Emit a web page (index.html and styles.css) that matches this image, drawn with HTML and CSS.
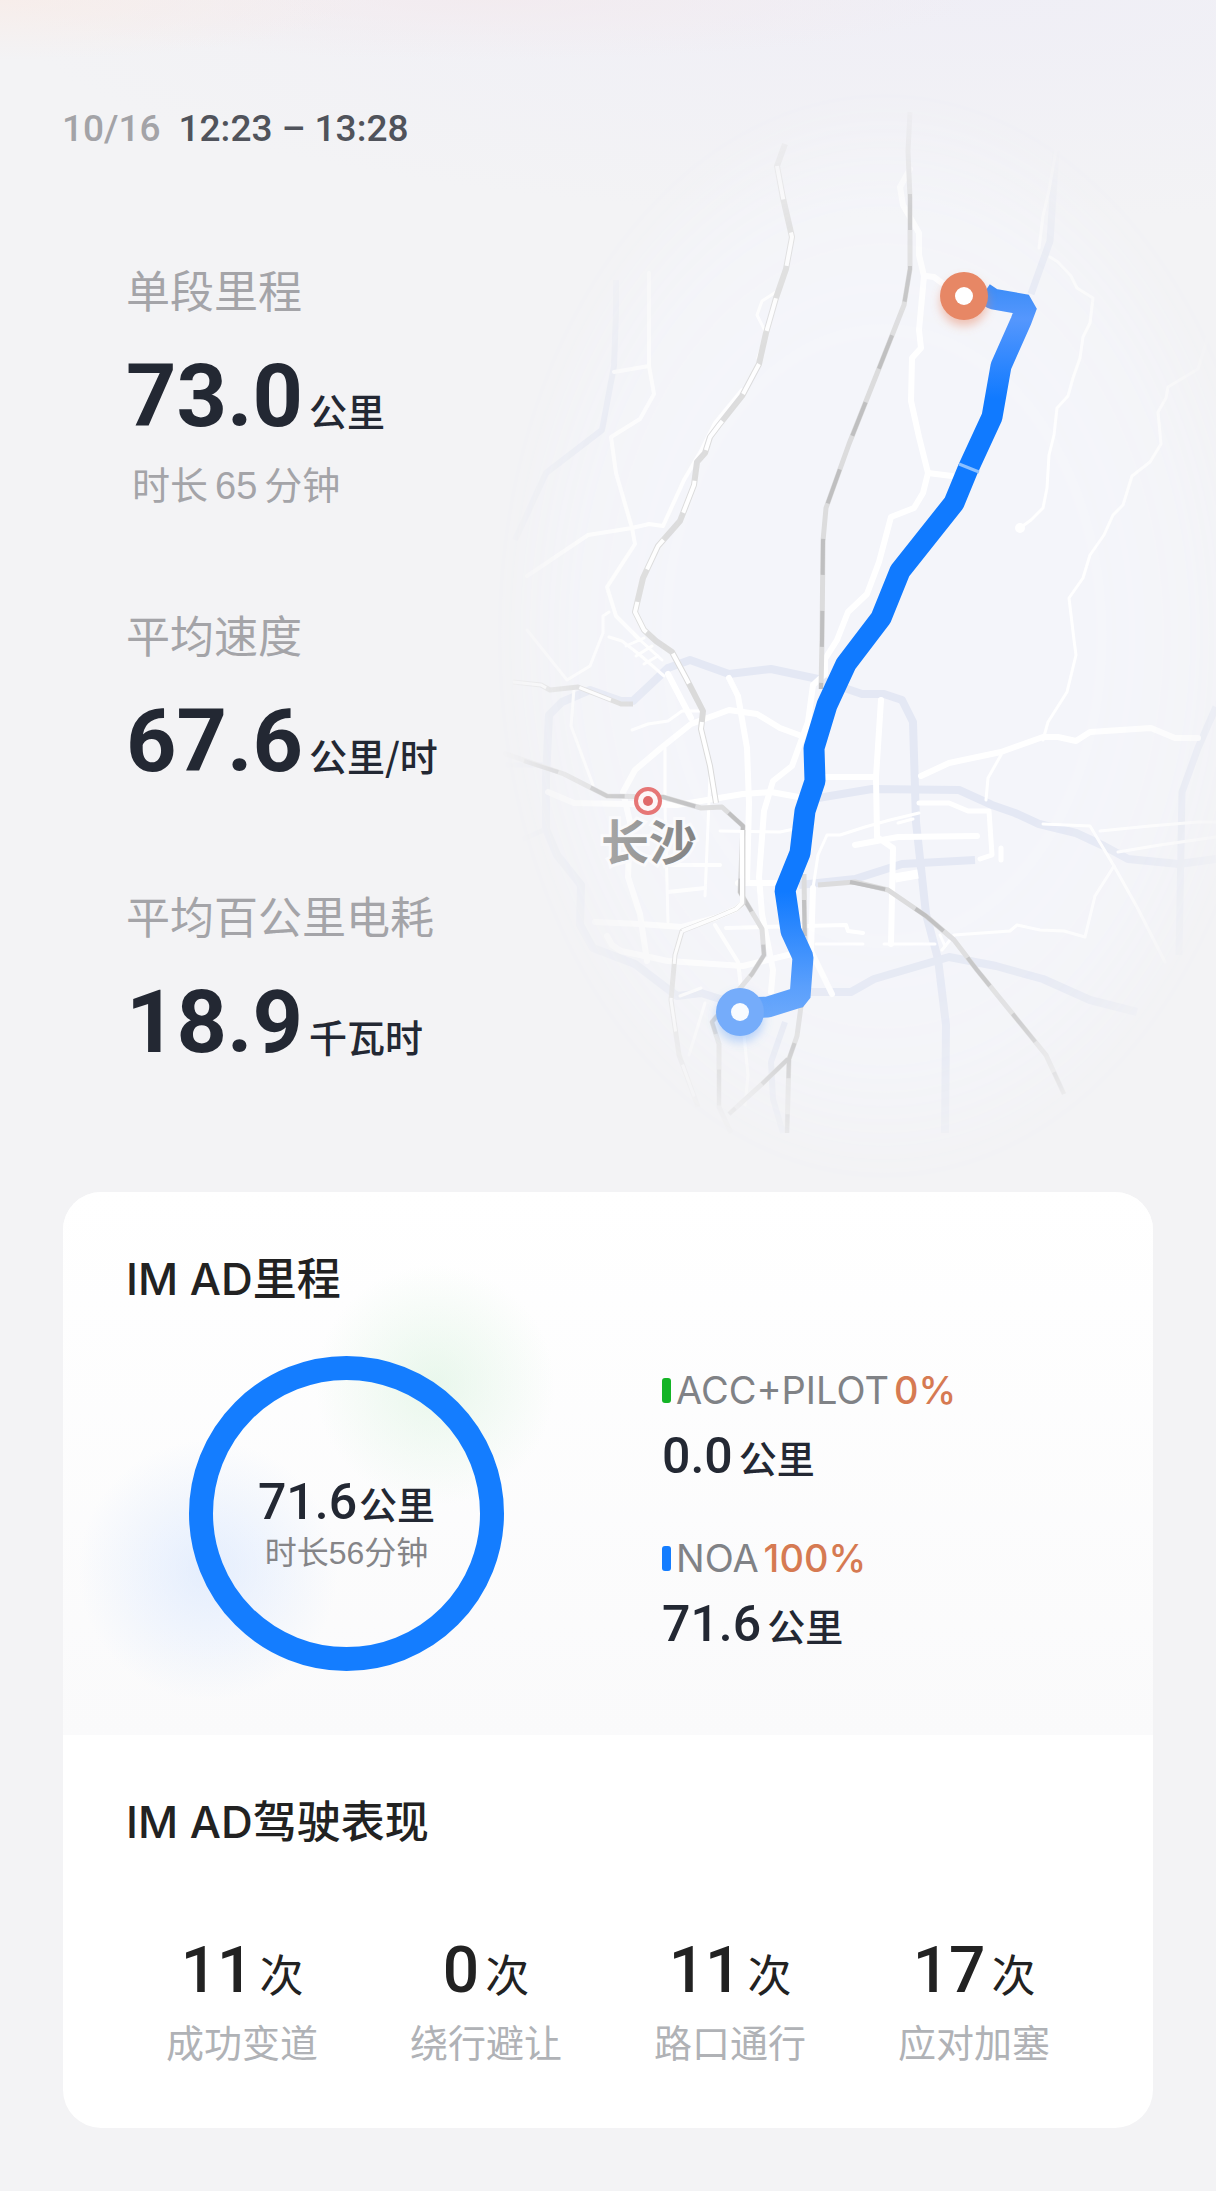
FILE: index.html
```html
<!DOCTYPE html>
<html lang="zh-CN">
<head>
<meta charset="utf-8">
<meta name="viewport" content="width=device-width, initial-scale=1">
<title>行程详情</title>
<link rel="stylesheet" href="styles.css">
</head>
<body>
<main class="page">
  <section class="hero">
    <div class="summary">
      <header class="trip-time">
        <span class="trip-date">10/16</span>
        <time class="trip-range">12:23 – 13:28</time>
      </header>
      <div class="metrics">
        <div class="metric">
          <h2 class="metric-label">单段里程</h2>
          <p class="metric-value"><strong class="num-xl">73.0</strong><span class="unit">公里</span></p>
          <p class="metric-note"><span>时长</span><span>65</span><span>分钟</span></p>
        </div>
        <div class="metric">
          <h2 class="metric-label">平均速度</h2>
          <p class="metric-value"><strong class="num-xl">67.6</strong><span class="unit">公里/时</span></p>
        </div>
        <div class="metric">
          <h2 class="metric-label">平均百公里电耗</h2>
          <p class="metric-value"><strong class="num-xl">18.9</strong><span class="unit">千瓦时</span></p>
        </div>
      </div>
    </div>

    <svg class="map" viewBox="480 80 736 1100" role="img" aria-label="行程路线">
      <defs>
        <radialGradient id="fade" gradientUnits="userSpaceOnUse" cx="0" cy="0" r="1" gradientTransform="translate(884 636) scale(392 550)">
          <stop offset="0.5" stop-color="#fff"/>
          <stop offset="0.78" stop-color="#fff" stop-opacity="0.7"/>
          <stop offset="1" stop-color="#fff" stop-opacity="0"/>
        </radialGradient>
        <mask id="oval" maskUnits="userSpaceOnUse" x="480" y="80" width="736" height="1100">
          <rect x="480" y="80" width="736" height="1100" fill="url(#fade)"/>
        </mask>
        <linearGradient id="route" gradientUnits="userSpaceOnUse" x1="0" y1="290" x2="0" y2="1015">
          <stop offset="0" stop-color="#3f8ef8"/>
          <stop offset="0.04" stop-color="#5597fd"/>
          <stop offset="0.15" stop-color="#107aff"/>
          <stop offset="0.83" stop-color="#107aff"/>
          <stop offset="0.96" stop-color="#5a9ffc"/>
          <stop offset="1" stop-color="#6aa8fb"/>
        </linearGradient>
        <linearGradient id="city" x1="0" y1="0" x2="1" y2="0">
          <stop offset="0" stop-color="#a9a9a9"/>
          <stop offset="1" stop-color="#828282"/>
        </linearGradient>
        <filter id="glow-end" x="-60%" y="-60%" width="220%" height="220%">
          <feDropShadow dx="0" dy="6" stdDeviation="5" flood-color="#e8835f" flood-opacity="0.45"/>
        </filter>
        <filter id="glow-start" x="-60%" y="-60%" width="220%" height="220%">
          <feDropShadow dx="0" dy="6" stdDeviation="5" flood-color="#5fa0f8" flood-opacity="0.4"/>
        </filter>
      </defs>

      <g mask="url(#oval)" fill="none" stroke-linejoin="round">
        <rect x="480" y="80" width="736" height="1100" fill="#f4f5fa"/>

        <!-- expressways -->
        <g stroke="#e4e8f4" stroke-width="8">
          <path d="M733 1003L701 993 677 996 635 964 593 948 580 925 581 885 557 855 546 829V777L549 715 562 702 590 690 621 701 633 701 668 668 690 660 729 674 771 669 818 679 862 694 884 694 902 700 913 722 916 822 926 914 938 959 946 1025 945 1133"/>
          <path d="M804 992L851 992 874 979 949 957 996 966 1043 979 1090 1000 1137 1012"/>
          <path d="M818 798L872 789 959 790 992 805 1015 813 1039 824 1076 833 1104 846 1128 859 1179 864 1216 859"/>
          <path d="M799 885L855 879 902 864 975 860"/>
          <path d="M1216 707L1198 748 1182 792 1179 955" stroke-width="7"/>
          <path d="M1056 151L1050 241 1031 294" stroke-width="7"/>
          <path d="M616 280V312L614 366 602 430 546 473 515 540" stroke-width="6"/>
          <path d="M785 1022L771 1062 773 1099 783 1133" stroke-width="6"/>
          <path d="M500 765H546M510 845L546 829" stroke-width="5"/>
        </g>

        <!-- city roads -->
        <g stroke="#fff" stroke-width="6" stroke-linecap="round">
          <path d="M910 169L900 187 903 205 919 233 919 255 924 276 919 330 921 348 912 358 911 401 919 437 928 473 923 493 914 508 891 517 879 562 867 594 848 612 837 640 825 659 825 674 813 685 808 722 792 766 773 781 764 811 759 877 762 914 773 970 771 992"/>
          <path d="M926 276L934 277 942 283M928 473L952 476"/>
          <path d="M921 776L949 763 1001 752 1043 737 1058 737 1076 741 1090 732 1151 728 1175 738 1198 738"/>
          <path d="M647 961L640 914 628 877 630 822 623 792 635 770 661 748 691 724 729 710 757 714 780 728 799 735"/>
          <path d="M729 678L738 696 747 748 749 803 747 883"/>
          <path d="M548 792L574 803 677 805 743 794 771 792 804 798"/>
          <path d="M881 700L876 777 877 837 893 848 891 944"/>
          <path d="M825 777H874M855 845L898 837 977 836"/>
          <path d="M668 674L691 718M738 883H780M743 903L736 909 715 918 682 927 640 924 595 922"/>
          <path d="M607 936L612 945 621 951 668 961 743 966 804 951"/>
          <path d="M919 803L949 803 968 811 989 811 992 855 980 859M1001 860V848" stroke-width="5"/>
          <path d="M813 888L811 951 832 994"/>
          <path d="M895 878L918 874" stroke-width="9" stroke-linecap="butt"/>
        </g>
        <g stroke="#fff" stroke-width="3" stroke-linecap="round">
          <path d="M1056 150L1049 190 1043 216 1039 248M1050 257L1058 262 1071 276 1077 288 1093 298 1090 323 1083 337 1080 358 1073 378 1068 396 1057 408 1054 435 1049 455 1047 488 1043 508 1031 520 1020 528"/>
          <path d="M1210 330L1198 369 1168 387 1166 398 1158 412 1161 444 1150 462 1132 476 1123 505 1113 515 1104 535 1090 555 1083 578 1069 598 1074 640 1076 655 1067 692 1048 722 1043 740"/>
          <path d="M649 273V366L654 394 640 419 611 437 616 473 632 528 635 544 607 587 616 616 640 640" stroke-width="4"/>
          <path d="M614 372L649 366M527 576L588 535 632 528 649 524 663 526 684 480 701 451 715 423 742 390" stroke-width="4"/>
          <path d="M766 333L757 315 762 301 776 292M758 358L766 333"/>
          <path d="M609 612L603 616 603 633 590 666 567 680 527 630"/>
          <path d="M574 689L571 726 593 785M665 748V807L668 922M710 777L705 896"/>
          <path d="M703 711L682 711 668 721 648 724 632 730"/>
          <path d="M609 637L622 641 640 655 664 676M626 646L644 638M636 656L652 646M644 664L658 656M640 640L662 660"/>
          <path d="M919 813L890 820 865 827 840 835 827 835 818 855 813 888M913 819L898 823"/>
          <path d="M1001 755L988 778 986 800M816 944H863M884 944H935M945 946L940 935"/>
          <path d="M942 950L954 935 1010 931 1017 925 1040 930 1064 931 1085 937 1095 896 1114 866 1090 826 1043 824"/>
          <path d="M1114 866L1137 907 1165 962M1100 831L1150 826 1198 822 1216 822M1118 852L1160 845 1216 837"/>
          <path d="M715 925L738 962 741 987M726 928L846 925 848 931 863 933M668 892L705 888M665 865H720" stroke-width="4"/>
          <path d="M705 1003L689 1055M680 996L701 988M744 1035L748 1075 745 1105M720 831L780 832 813 825"/>
        </g>
        <circle cx="1020" cy="528" r="5" fill="#fff"/>

        <!-- railways: light bed with darker sleepers -->
        <g stroke="#dcdcdd" stroke-width="5">
          <path d="M910 112L908 151 910 198 910 269 904 305 876 376 849 444 826 508 823 541 822 640 821 689"/>
          <path d="M503 753L564 774 607 796 663 797 701 808 722 807 743 826 740 892 762 929 764 955 752 974 712 1022 719 1044 719 1107 731 1133"/>
          <path d="M804 874L805 944 802 999 797 1036 789 1059 787 1133M788 1059L762 1084 729 1114"/>
          <path d="M818 885L855 882 888 890 926 916 954 940 977 970 1020 1023 1046 1055 1064 1094"/>
        </g>
        <g stroke="#bfbfc0" stroke-width="4" stroke-dasharray="36 36">
          <path d="M910 194L910 269 904 305 876 376 849 444 826 508 823 541 822 640 821 689"/>
          <path d="M524 761L564 774 607 796 663 797 701 808 722 807 743 826 740 892 762 929 764 955 752 974 712 1022 719 1044 719 1107 731 1133"/>
          <path d="M804 900L805 944 802 999 797 1036 789 1059 787 1133M788 1059L762 1084 729 1114"/>
          <path d="M850 882L888 890 926 916 954 940 977 970 1020 1023 1046 1055 1064 1094"/>
        </g>
        <g stroke="#dadada" stroke-width="6">
          <path d="M785 144L777 166 783 198 792 237 786 269 776 298 766 333 759 364 742 396 719 425 710 437 705 453 697 462 694 485 680 521 658 546 643 578 635 612 644 630 656 641 672 652 686 678 703 711 701 729 710 766 716 803"/>
          <path d="M743 830V903L736 909 715 918 682 931 675 955 671 1000 679 1055 698 1107" stroke-width="5"/>
          <path d="M513 682L541 685 550 690 578 687 621 704 633 704" stroke-width="5"/>
        </g>
        <g stroke="#fff" stroke-width="4" stroke-dasharray="34 34">
          <path d="M777 166L783 198 792 237 786 269 776 298 766 333 759 364 742 396 719 425 710 437 705 453 697 462 694 485 680 521 658 546 643 578 635 612 644 630 656 641 672 652 686 678 703 711"/>
          <path d="M702 722L701 729 710 766 716 803" stroke-dasharray="none" stroke-width="4"/>
          <path d="M742 830V903L736 909 715 918 682 931" stroke-dasharray="none"/>
          <path d="M682 931L675 955 671 1000 679 1055 698 1107" stroke-width="3"/>
          <path d="M513 682L541 685 550 690 578 687 621 704" stroke-width="3"/>
        </g>
      </g>

      <!-- driven route -->
      <path d="M984 293L993 299 1027 305 1021 321 1001 366 992 417 968 469 954 503 900 571 881 618 846 664 827 705 814 748 815 781 805 811 800 853 785 890 791 931 803 957 800 997 768 1007 742 1008" fill="none" stroke="url(#route)" stroke-width="21" stroke-linejoin="bevel"/>
      <path d="M959 464L979 472" stroke="#8cc0ff" stroke-width="3"/>

      <!-- start and end pins -->
      <circle cx="740" cy="1012" r="24" fill="#74acfa" filter="url(#glow-start)"/>
      <circle cx="740" cy="1012" r="9" fill="#f8fbff"/>
      <circle cx="964" cy="296" r="24" fill="#e78765" filter="url(#glow-end)"/>
      <circle cx="964" cy="296" r="9" fill="#fff"/>

      <!-- city marker -->
      <circle cx="648" cy="801" r="12" fill="#fdf6f7" stroke="#e67676" stroke-width="4"/>
      <circle cx="648" cy="801" r="5" fill="#e06a6a"/>
      <text class="city-name" x="649" y="860" text-anchor="middle" fill="url(#city)">长沙</text>
    </svg>
  </section>

  <article class="card">
    <section class="panel panel-mileage">
      <h2 class="panel-title">IM AD里程</h2>
      <div class="mileage">
        <div class="ring">
          <p class="value-row ring-value"><strong class="num-md">71.6</strong><span class="unit">公里</span></p>
          <p class="ring-note">时长56分钟</p>
        </div>
        <ul class="legend">
          <li class="legend-item">
            <p class="legend-label"><i class="swatch swatch-green"></i><span>ACC+PILOT</span><b class="percent">0%</b></p>
            <p class="value-row legend-value"><strong class="num-md">0.0</strong><span class="unit">公里</span></p>
          </li>
          <li class="legend-item">
            <p class="legend-label"><i class="swatch swatch-blue"></i><span>NOA</span><b class="percent">100%</b></p>
            <p class="value-row legend-value"><strong class="num-md">71.6</strong><span class="unit">公里</span></p>
          </li>
        </ul>
      </div>
    </section>

    <section class="panel panel-performance">
      <h2 class="panel-title">IM AD驾驶表现</h2>
      <ul class="counts">
        <li class="count"><p class="count-value"><strong class="num-lg">11</strong><span class="times">次</span></p><p class="count-label">成功变道</p></li>
        <li class="count"><p class="count-value"><strong class="num-lg">0</strong><span class="times">次</span></p><p class="count-label">绕行避让</p></li>
        <li class="count"><p class="count-value"><strong class="num-lg">11</strong><span class="times">次</span></p><p class="count-label">路口通行</p></li>
        <li class="count"><p class="count-value"><strong class="num-lg">17</strong><span class="times">次</span></p><p class="count-label">应对加塞</p></li>
      </ul>
    </section>
  </article>
</main>
</body>
</html>
```
FILE: styles.css
```css
* {
  box-sizing: border-box;
}

body,
h2,
p,
ul {
  margin: 0;
  padding: 0;
}

ul {
  list-style: none;
}

body {
  background: #f3f3f5;
  color: #232833;
  font-family: Inter, "Noto Sans CJK SC", sans-serif;
}

.page {
  padding: 80px 0 62px;
  background:
    radial-gradient(ellipse 30% 60px at 0 0, rgba(248, 236, 232, 0.8), transparent),
    radial-gradient(ellipse 40% 60px at 40% 0, rgba(243, 233, 237, 0.7), transparent),
    radial-gradient(ellipse 80% 220px at 80% 0, rgba(239, 238, 246, 0.9), transparent),
    #f3f3f5;
}

/* Trip summary and map */
.hero {
  display: grid;
  grid-template-columns: 480px 1fr;
  align-items: start;
}

.summary {
  padding: 25px 0 0 62px;
}

.trip-time {
  display: flex;
  gap: 18px;
  font: 500 37px/48px Roboto, sans-serif;
}

.trip-date {
  color: #a3a3a7;
}

.trip-range {
  color: #50535b;
}

.metrics {
  display: flex;
  flex-direction: column;
  gap: 100px;
  padding: 106px 0 0 64px;
}

.metric-label {
  color: #a4a4a8;
  font: 400 44px/60px "Noto Sans CJK SC", sans-serif;
}

.metric-value {
  display: flex;
  align-items: baseline;
  gap: 6px;
  margin-top: 33px;
  white-space: nowrap;
}

.num-xl {
  font: 700 88px/88px Roboto, sans-serif;
}

.unit {
  font: 500 38px/38px "Noto Sans CJK SC", sans-serif;
}

.metric-note {
  display: flex;
  gap: 7px;
  margin: 24px 0 -4px;
  padding-left: 6px;
  color: #a4a4a8;
  font: 400 38px/44px "Liberation Sans", "Noto Sans CJK SC", sans-serif;
}

.map {
  display: block;
  width: 100%;
}

.city-name {
  font: 700 48px "Noto Sans CJK SC", sans-serif;
  paint-order: stroke;
  stroke: #fafafc;
  stroke-width: 6px;
}

/* Assisted-driving card */
.card {
  margin: 12px 63px 0;
  overflow: hidden;
  border-radius: 38px;
  background: #fff;
}

.panel {
  padding: 57px 57px 61px;
}

.panel-mileage {
  padding-bottom: 64px;
  background:
    radial-gradient(circle 120px at 372px 193px, rgba(212, 241, 218, 0.5), transparent),
    radial-gradient(circle 130px at 145px 378px, rgba(205, 224, 255, 0.5), transparent),
    linear-gradient(#fff, #fafafb);
}

.panel-title {
  padding-left: 6px;
  color: #222;
  font: 500 44px/60px Inter, "Noto Sans CJK SC", sans-serif;
}

.mileage {
  display: grid;
  grid-template-columns: 315px 1fr;
  column-gap: 158px;
  align-items: start;
  padding: 47px 0 0 69px;
}

.ring {
  display: flex;
  flex-direction: column;
  align-items: center;
  justify-content: center;
  gap: 4px;
  aspect-ratio: 1;
  padding-top: 24px;
  border: 24px solid #147dff;
  border-radius: 50%;
}

.value-row {
  display: flex;
  align-items: baseline;
  gap: 2px;
}

.num-md {
  font: 500 50px/50px Roboto, sans-serif;
}

.ring-note {
  color: #858588;
  font: 400 32px/44px "Liberation Sans", "Noto Sans CJK SC", sans-serif;
}

.legend {
  display: flex;
  flex-direction: column;
  gap: 53px;
  padding-top: 10px;
}

.legend-label {
  display: flex;
  align-items: center;
  gap: 5px;
  color: #808286;
  font: 400 38px/48px Inter, sans-serif;
}

.swatch {
  width: 9px;
  height: 25px;
  border-radius: 3px;
}

.swatch-green {
  background: #14b426;
}

.swatch-blue {
  background: #147dff;
}

.percent {
  color: #d67a52;
  font-weight: 500;
}

.legend-value {
  gap: 6px;
  margin-top: 17px;
}

/* Driving performance counters */
.counts {
  display: grid;
  grid-template-columns: repeat(4, 1fr);
  padding-top: 87px;
}

.count {
  text-align: center;
}

.count-value {
  display: flex;
  align-items: baseline;
  justify-content: center;
  gap: 6px;
  color: #222;
}

.num-lg {
  font: 500 64px/64px Roboto, sans-serif;
}

.times {
  font: 400 44px/44px "Noto Sans CJK SC", sans-serif;
}

.count-label {
  margin-top: 12px;
  color: #b0b2b6;
  font: 400 38px/52px "Noto Sans CJK SC", sans-serif;
}
```
